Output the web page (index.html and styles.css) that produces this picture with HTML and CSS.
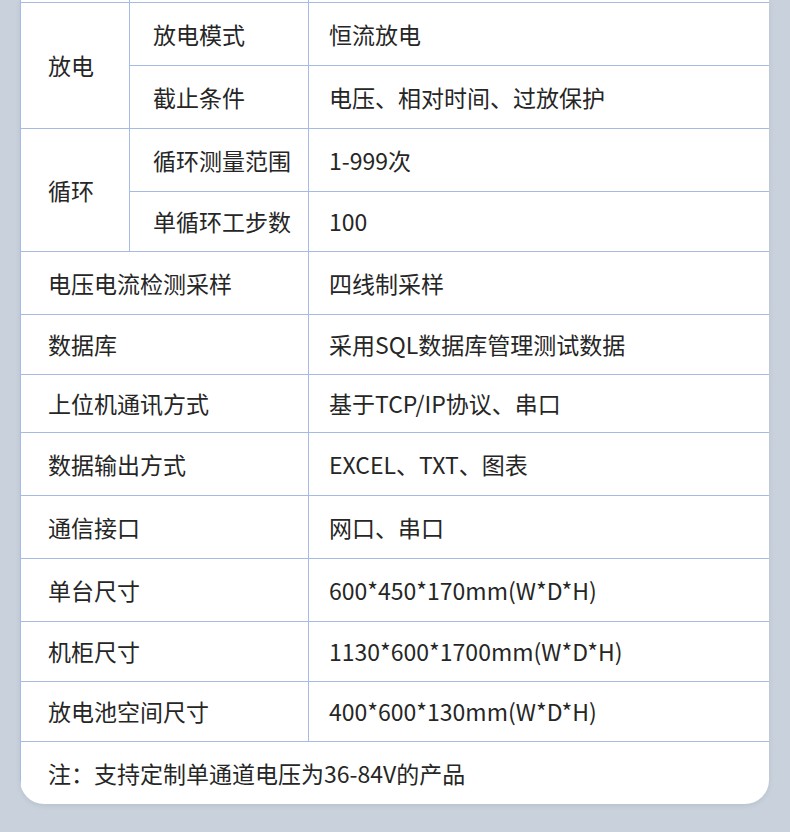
FILE: index.html
```html
<!DOCTYPE html>
<html lang="zh-CN">
<head>
  <meta charset="UTF-8">
  <meta name="viewport" content="width=device-width, initial-scale=1.0">
  <title>技术参数</title>
  <link rel="stylesheet" href="styles.css">
</head>
<body>
  <div class="card">
    <table class="spec">
      <colgroup>
        <col class="col-group">
        <col class="col-item">
        <col class="col-value">
      </colgroup>
      <!-- tail of the row above, cut off by the screen -->
      <tr class="cut">
        <td></td>
        <td></td>
        <td></td>
      </tr>
      <tr>
        <td class="group" rowspan="2">放电</td>
        <td class="item">放电模式</td>
        <td class="value">恒流放电</td>
      </tr>
      <tr>
        <td class="item">截止条件</td>
        <td class="value">电压、相对时间、过放保护</td>
      </tr>
      <tr>
        <td class="group" rowspan="2">循环</td>
        <td class="item">循环测量范围</td>
        <td class="value">1-999次</td>
      </tr>
      <tr class="short">
        <td class="item">单循环工步数</td>
        <td class="value">100</td>
      </tr>
      <tr>
        <td class="group" colspan="2">电压电流检测采样</td>
        <td class="value">四线制采样</td>
      </tr>
      <tr class="short">
        <td class="group" colspan="2">数据库</td>
        <td class="value">采用SQL数据库管理测试数据</td>
      </tr>
      <tr class="shorter">
        <td class="group" colspan="2">上位机通讯方式</td>
        <td class="value">基于TCP/IP协议、串口</td>
      </tr>
      <tr>
        <td class="group" colspan="2">数据输出方式</td>
        <td class="value">EXCEL、TXT、图表</td>
      </tr>
      <tr>
        <td class="group" colspan="2">通信接口</td>
        <td class="value">网口、串口</td>
      </tr>
      <tr>
        <td class="group" colspan="2">单台尺寸</td>
        <td class="value">600*450*170mm(W*D*H)</td>
      </tr>
      <tr class="short">
        <td class="group" colspan="2">机柜尺寸</td>
        <td class="value">1130*600*1700mm(W*D*H)</td>
      </tr>
      <tr class="short">
        <td class="group" colspan="2">放电池空间尺寸</td>
        <td class="value">400*600*130mm(W*D*H)</td>
      </tr>
      <tr class="note">
        <td class="group" colspan="3">注：支持定制单通道电压为36-84V的产品</td>
      </tr>
    </table>
  </div>
</body>
</html>
```

FILE: styles.css
```css
/* Page */
body {
  margin: 0;
  background-color: #c9d2dc;
  font-family: "Noto Sans CJK SC", "Noto Sans", sans-serif;
  color: #262626;
  height: 832px;
  overflow: hidden;
}

.card {
  margin-left: 20px;
  width: 749px;
  background-color: #fff;
  border-radius: 0 0 24px 24px;
  box-shadow: 0 2px 5px rgba(40, 60, 90, 0.1);
  overflow: hidden;
}

/* Spec table */
.spec {
  width: 100%;
  border-collapse: collapse;
  table-layout: fixed;
  font-size: 23px;
}

.col-group {
  width: 109px;
}

.col-item {
  width: 179px;
}

.spec td {
  border: 1px solid #a6bbe3;
  padding: 0;
  vertical-align: middle;
  white-space: nowrap;
}

.spec tr {
  height: 63px;
}

.spec tr.short {
  height: 60px;
}

.spec tr.shorter {
  height: 58px;
}

.spec tr.cut {
  height: 2px;
}

.spec tr.cut td {
  border-top: none;
}

.spec tr.note {
  height: 63px;
}

.spec tr.note td {
  border-bottom: none;
}

.spec td:last-child {
  border-right: none;
}

.group {
  padding-left: 27px !important;
}

.item {
  padding-left: 23px !important;
}

.value {
  padding-left: 20px !important;
}
```
